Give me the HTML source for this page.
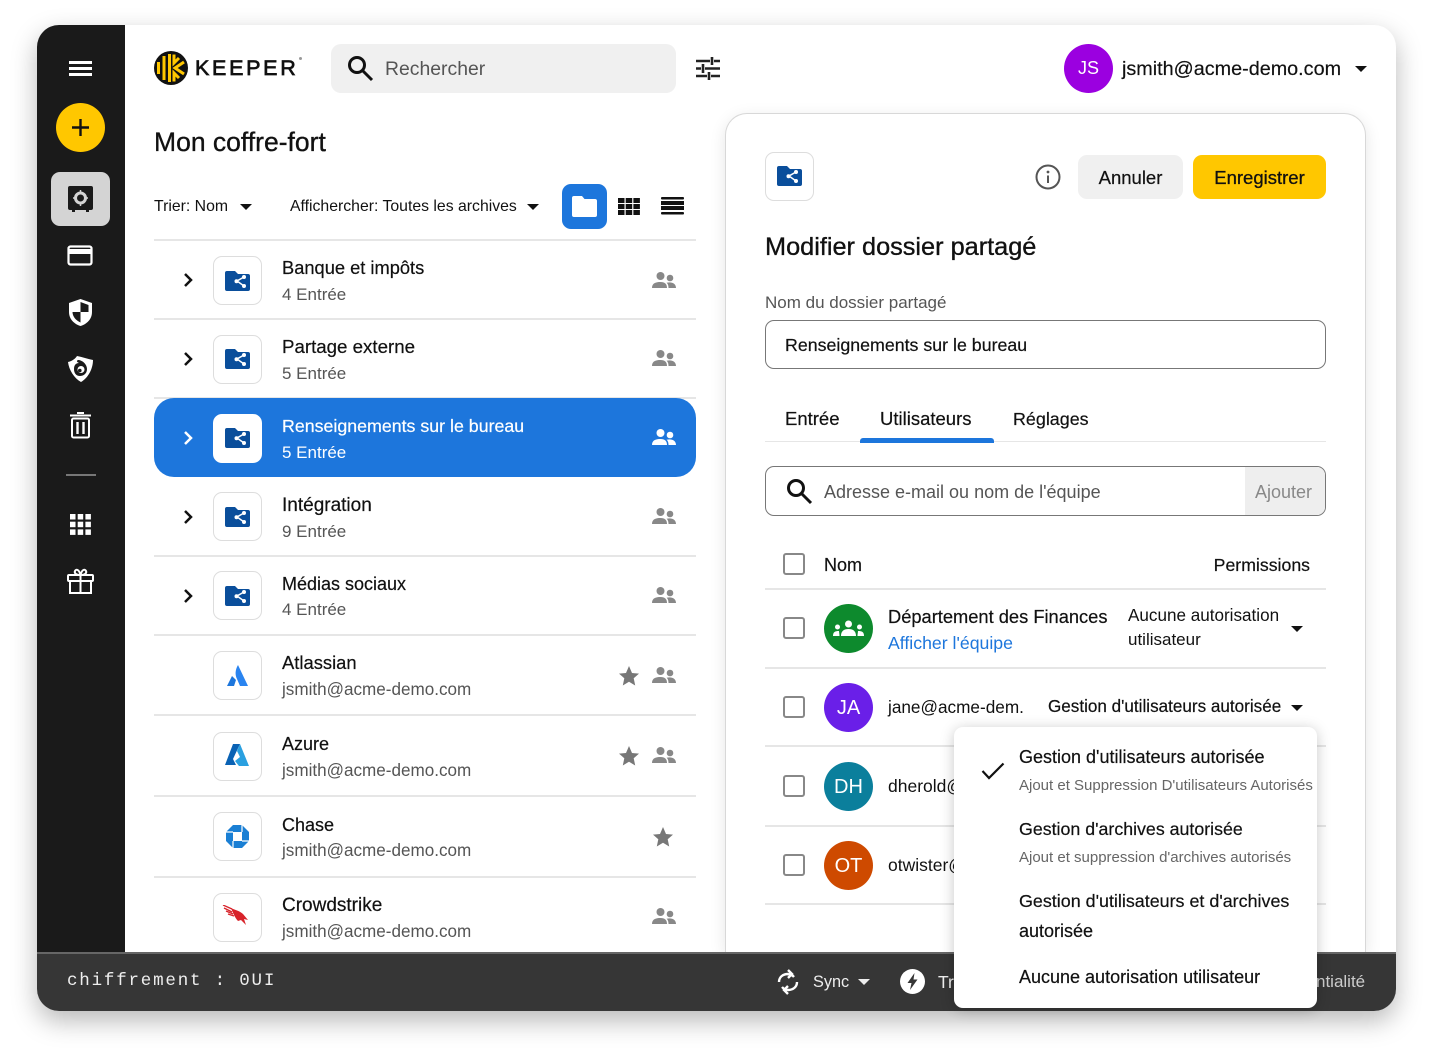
<!DOCTYPE html>
<html lang="fr"><head><meta charset="utf-8"><title>Keeper</title>
<style>
*{box-sizing:border-box}
html,body{margin:0;padding:0;width:1432px;height:1060px;overflow:hidden;background:#fff;font-family:"Liberation Sans",sans-serif;color:#111}
div,span,svg{position:absolute}
.t{white-space:nowrap;line-height:20px;height:20px;font-size:18px;color:#111;-webkit-text-stroke:.2px currentColor}
.s{color:#555;font-size:17px;-webkit-text-stroke:0}
.e{font-size:17.100px}
.hr{height:2px;background:#e6e6e6}
.box{width:49px;height:49px;border:1px solid #ddd;border-radius:9px;background:#fff}
.cb{left:783px;width:22px;height:22px;border:2px solid #888;border-radius:3px;background:#fff}
.av{left:824px;width:49px;height:49px;border-radius:50%;color:#fff;font-size:20px;line-height:49px;text-align:center}
.tri{width:0;height:0;border-left:6px solid transparent;border-right:6px solid transparent;border-top:6px solid #111}
</style></head><body>
<svg width="0" height="0" style="left:0;top:0"><defs>
<symbol id="fold" viewBox="0 0 25 20"><path d="M2 0H10L13 3H23A2 2 0 0 1 25 5V18A2 2 0 0 1 23 20H2A2 2 0 0 1 0 18V2A2 2 0 0 1 2 0Z" fill="#0a4e9b"/><path d="M19 6 12 10 19 15" fill="none" stroke="#fff" stroke-width="1.500"/><circle cx="19" cy="6" r="2" fill="#fff"/><circle cx="11.500" cy="10.300" r="2" fill="#fff"/><circle cx="19" cy="15" r="2" fill="#fff"/></symbol>
<symbol id="ppl" viewBox="0 0 24 17"><circle cx="8.500" cy="4" r="4" fill="currentColor"/><circle cx="18" cy="6" r="3.300" fill="currentColor"/><path d="M0 16C0 11 4 10 8.500 10S15 12 15 16ZM16.500 16C16.500 13 15.500 11.500 14.500 10.800 19 9.500 24 11 24 16Z" fill="currentColor"/></symbol>
<symbol id="chev" viewBox="0 0 10 16"><path d="M2 2 8 8 2 14" fill="none" stroke="currentColor" stroke-width="2.500"/></symbol>
<symbol id="star" viewBox="0 0 20 20"><path d="M10 0 13 7 20 7.600 14.700 12.300 16.200 19.500 10 15.700 3.800 19.500 5.300 12.300 0 7.600 7 7Z" fill="#777"/></symbol>
</defs></svg>

<div style="left:37px;top:25px;width:1359px;height:986px;background:#fff;border-radius:22px;box-shadow:0 10px 26px rgba(0,0,0,.28);overflow:hidden">
 <div style="left:0;top:0;width:88px;height:930px;background:#1a1a1a"></div>
 <div style="left:0;top:927px;width:1359px;height:59px;background:#363636;border-top:2px solid #666"></div>
</div>

<!-- sidebar -->
<div style="left:69px;top:61px;width:23px;height:3px;background:#fff"></div>
<div style="left:69px;top:67px;width:23px;height:3px;background:#fff"></div>
<div style="left:69px;top:73px;width:23px;height:3px;background:#fff"></div>
<div style="left:56px;top:103px;width:49px;height:49px;border-radius:50%;background:#ffc700"></div>
<svg style="left:71px;top:118px" width="19" height="19" viewBox="0 0 19 19"><path d="M9.500 1V18M1 9.500H18" stroke="#111" stroke-width="2.400"/></svg>
<div style="left:51px;top:172px;width:59px;height:54px;border-radius:9px;background:#d4d4d4"></div>
<svg style="left:68px;top:186px" width="25" height="27" viewBox="0 0 25 27"><rect width="25" height="24" rx="2" fill="#1a1a1a"/><path d="M4 24h3v2H4zM18 24h3v2h-3z" fill="#1a1a1a"/><circle cx="12.500" cy="12" r="5" fill="none" stroke="#d4d4d4" stroke-width="3"/><path d="M12.500 4v2M12.500 18v2M5 12h2M18 12h2" stroke="#d4d4d4" stroke-width="1.500"/></svg>
<svg style="left:67px;top:245px" width="27" height="22" viewBox="0 0 27 22"><rect x="1.500" y="1.500" width="23" height="18" rx="2" fill="none" stroke="#fff" stroke-width="2.200"/><rect x="1.500" y="4" width="23" height="5" fill="#fff"/></svg>
<svg style="left:68px;top:298px" width="25" height="29" viewBox="0 0 25 29"><path d="M12.500 1 24 5V14C24 21 19 26 12.500 28 6 26 1 21 1 14V5Z" fill="#fff"/><path d="M12.500 4 20.500 7V14H12.500ZM12.500 14V24.500C8 22.500 4.500 18.500 4.500 14Z" fill="#1a1a1a"/></svg>
<svg style="left:67px;top:355px" width="27" height="28" viewBox="0 0 27 28"><path d="M1 7C5 6 8 4 10 1 15 2 21 4 26 5 26 14 21 23 14 27 7 23 2 15 1 7Z" fill="#fff"/><path d="M11 5C15 5 20 9 20 14 20 19 16 21 13 21 9 21 7 18 7 14 7 10 9 8 12 8 10 7 9 6 11 5Z" fill="#1a1a1a"/><circle cx="14" cy="14.500" r="3.500" fill="#fff"/><circle cx="12.800" cy="15.500" r="1.800" fill="#1a1a1a"/></svg>
<svg style="left:70px;top:412px" width="21" height="27" viewBox="0 0 21 27"><path d="M0 3.500H21M7 1H14" stroke="#fff" stroke-width="2"/><rect x="2" y="6.500" width="17" height="19" rx="1.500" fill="none" stroke="#fff" stroke-width="2"/><path d="M7.500 10V22M13.500 10V22" stroke="#fff" stroke-width="2.400"/></svg>
<div style="left:66px;top:474px;width:30px;height:2px;background:#777"></div>
<svg style="left:70px;top:514px" width="21" height="21" viewBox="0 0 21 21" fill="#fff"><rect width="5.500" height="5.500"/><rect x="7.700" width="5.500" height="5.500"/><rect x="15.400" width="5.500" height="5.500"/><rect y="7.700" width="5.500" height="5.500"/><rect x="7.700" y="7.700" width="5.500" height="5.500"/><rect x="15.400" y="7.700" width="5.500" height="5.500"/><rect y="15.400" width="5.500" height="5.500"/><rect x="7.700" y="15.400" width="5.500" height="5.500"/><rect x="15.400" y="15.400" width="5.500" height="5.500"/></svg>
<svg style="left:67px;top:568px" width="27" height="26" viewBox="0 0 27 26" fill="none" stroke="#fff" stroke-width="2"><rect x="1" y="7" width="25" height="6" rx="1"/><path d="M3 13V25H24V13M13.500 7V25M13.500 7C9 7 7 5 8 3S12 1 13.500 7C15 1 18 1 19 3S18 7 13.500 7Z"/></svg>

<!-- header -->
<svg style="left:154px;top:51px" width="34" height="34" viewBox="0 0 34 34"><circle cx="17" cy="17" r="17" fill="#111"/><g fill="none" stroke="#ffc700" stroke-width="3"><path d="M4.500 11V23M10 5V29"/><path d="M15.500 3V31"/><path d="M20 3.500V12L25 7M30 11 21 17 30 23M20 30.500V22L25 27"/></g></svg>
<div class="t" style="left:195px;top:58px;line-height:20px;font-size:21.500px;letter-spacing:2.700px;-webkit-text-stroke:.7px #111">KEEPER</div>
<div style="left:299px;top:57px;width:3px;height:3px;border-radius:50%;background:#999"></div>
<div style="left:331px;top:44px;width:345px;height:49px;background:#f0f0f0;border-radius:10px"></div>
<svg style="left:347px;top:55px" width="27" height="27" viewBox="0 0 27 27" fill="none" stroke="#111" stroke-width="3"><circle cx="10" cy="10" r="7.500"/><path d="M15.500 15.500 25 25"/></svg>
<div class="t" style="left:385px;top:59px;color:#555;font-size:19.400px;-webkit-text-stroke:0">Rechercher</div>
<svg style="left:696px;top:57px" width="24" height="23" viewBox="0 0 24 23" fill="none" stroke="#222" stroke-width="2.600"><path d="M0 4H14M18 4H24M0 11.500H5M9 11.500H24M0 19H11M15 19H24M16 0V8M7 7V16M13 15V23"/></svg>
<div style="left:1064px;top:44px;width:49px;height:49px;border-radius:50%;background:#9b00e0;color:#fff;font-size:18px;line-height:48px;text-align:center">JS</div>
<div class="t" style="left:1122px;top:59px;font-size:19.800px">jsmith@acme-demo.com</div>
<div class="tri" style="left:1355px;top:66px"></div>

<!-- left list -->
<div class="t" style="left:154px;top:130px;height:24px;line-height:24px;font-size:26.500px;-webkit-text-stroke:.35px #111">Mon coffre-fort</div>
<div class="t" style="left:154px;top:197px;font-size:15.800px;-webkit-text-stroke:0">Trier: Nom</div>
<div class="tri" style="left:240px;top:204px"></div>
<div class="t" style="left:290px;top:197px;font-size:15.800px;-webkit-text-stroke:0">Affichercher: Toutes les archives</div>
<div class="tri" style="left:527px;top:204px"></div>
<div style="left:562px;top:184px;width:45px;height:45px;background:#1d76dc;border-radius:9px"></div>
<svg style="left:572px;top:196px" width="25" height="21" viewBox="0 0 25 21"><path d="M2 0H10L12.500 3H23A2 2 0 0 1 25 5V19A2 2 0 0 1 23 21H2A2 2 0 0 1 0 19V2A2 2 0 0 1 2 0Z" fill="#fff"/></svg>
<svg style="left:618px;top:198px" width="22" height="17" viewBox="0 0 22 17" fill="#111"><rect width="6.500" height="5"/><rect x="7.700" width="6.500" height="5"/><rect x="15.400" width="6.500" height="5"/><rect y="6" width="6.500" height="5"/><rect x="7.700" y="6" width="6.500" height="5"/><rect x="15.400" y="6" width="6.500" height="5"/><rect y="12" width="6.500" height="5"/><rect x="7.700" y="12" width="6.500" height="5"/><rect x="15.400" y="12" width="6.500" height="5"/></svg>
<svg style="left:661px;top:197px" width="24" height="18" viewBox="0 0 24 18" fill="#111"><rect width="23" height="2.500" rx="1"/><rect y="4" width="23" height="4"/><rect y="9" width="23" height="4"/><rect y="15" width="23" height="2.500" rx="1"/></svg>

<div class="hr" style="left:154px;top:239px;width:542px"></div>
<div class="hr" style="left:154px;top:318px;width:542px"></div>
<div class="hr" style="left:154px;top:397px;width:542px"></div>
<div class="hr" style="left:154px;top:555px;width:542px"></div>
<div class="hr" style="left:154px;top:634px;width:542px"></div>
<div class="hr" style="left:154px;top:714px;width:542px"></div>
<div class="hr" style="left:154px;top:795px;width:542px"></div>
<div class="hr" style="left:154px;top:876px;width:542px"></div>
<div style="left:154px;top:398px;width:542px;height:79px;background:#1d76dc;border-radius:20px"></div>

<svg style="left:183px;top:272px;color:#111" width="10" height="16"><use href="#chev"/></svg>
<div class="box" style="left:213px;top:256px"></div><svg style="left:225px;top:271px" width="25" height="20"><use href="#fold"/></svg>
<div class="t" style="left:282px;top:258px;font-size:18.300px">Banque et impôts</div><div class="t s" style="left:282px;top:285px">4 Entrée</div>
<svg style="left:652px;top:272px;color:#888" width="24" height="17"><use href="#ppl"/></svg>

<svg style="left:183px;top:351px;color:#111" width="10" height="16"><use href="#chev"/></svg>
<div class="box" style="left:213px;top:335px"></div><svg style="left:225px;top:349px" width="25" height="20"><use href="#fold"/></svg>
<div class="t" style="left:282px;top:337px;font-size:18.700px">Partage externe</div><div class="t s" style="left:282px;top:364px">5 Entrée</div>
<svg style="left:652px;top:350px;color:#888" width="24" height="17"><use href="#ppl"/></svg>

<svg style="left:183px;top:430px;color:#fff" width="10" height="16"><use href="#chev"/></svg>
<div class="box" style="left:213px;top:414px;border-color:#fff"></div><svg style="left:225px;top:428px" width="25" height="20"><use href="#fold"/></svg>
<div class="t" style="left:282px;top:416px;color:#fff;font-size:17.800px">Renseignements sur le bureau</div><div class="t s" style="left:282px;top:443px;color:#fff">5 Entrée</div>
<svg style="left:652px;top:429px;color:#fff" width="24" height="17"><use href="#ppl"/></svg>

<svg style="left:183px;top:509px;color:#111" width="10" height="16"><use href="#chev"/></svg>
<div class="box" style="left:213px;top:492px"></div><svg style="left:225px;top:507px" width="25" height="20"><use href="#fold"/></svg>
<div class="t" style="left:282px;top:496px;font-size:19px">Intégration</div><div class="t s" style="left:282px;top:522px">9 Entrée</div>
<svg style="left:652px;top:508px;color:#888" width="24" height="17"><use href="#ppl"/></svg>

<svg style="left:183px;top:588px;color:#111" width="10" height="16"><use href="#chev"/></svg>
<div class="box" style="left:213px;top:571px"></div><svg style="left:225px;top:586px" width="25" height="20"><use href="#fold"/></svg>
<div class="t" style="left:282px;top:574px">Médias sociaux</div><div class="t s" style="left:282px;top:600px">4 Entrée</div>
<svg style="left:652px;top:587px;color:#888" width="24" height="17"><use href="#ppl"/></svg>

<div class="box" style="left:213px;top:651px"></div>
<svg style="left:227px;top:665px" width="21" height="21" viewBox="0 0 21 21"><path d="M0 21 5 11 9 15 7 21Z" fill="#1d76dc"/><path d="M11 0C8 5 8 10 10 14L13 21H21Z" fill="#2a84f0"/></svg>
<div class="t" style="left:282px;top:653px;font-size:18.400px">Atlassian</div><div class="t s e" style="left:282px;top:680px">jsmith@acme-demo.com</div>
<svg style="left:619px;top:666px" width="20" height="20"><use href="#star"/></svg>
<svg style="left:652px;top:667px;color:#888" width="24" height="17"><use href="#ppl"/></svg>

<div class="box" style="left:213px;top:732px"></div>
<svg style="left:225px;top:744px" width="24" height="22" viewBox="0 0 24 22"><path d="M8 0H15L8 15 11 21H0Z" fill="#0a62b4"/><path d="M15 0 24 22H14L10 17 15 13 12 7Z" fill="#2aa0e0"/></svg>
<div class="t" style="left:282px;top:734px">Azure</div><div class="t s e" style="left:282px;top:761px">jsmith@acme-demo.com</div>
<svg style="left:619px;top:746px" width="20" height="20"><use href="#star"/></svg>
<svg style="left:652px;top:747px;color:#888" width="24" height="17"><use href="#ppl"/></svg>

<div class="box" style="left:213px;top:812px"></div>
<svg style="left:226px;top:825px" width="23" height="23" viewBox="0 0 23 23"><path d="M7 0H16L23 7V16L16 23H7L0 16V7Z" fill="#1a7fd4"/><rect x="7" y="7" width="9" height="9" fill="#fff"/><path d="M7 7H0M16 7V0M16 16H23M7 16V23" stroke="#fff" stroke-width="1.200"/></svg>
<div class="t" style="left:282px;top:815px">Chase</div><div class="t s e" style="left:282px;top:841px">jsmith@acme-demo.com</div>
<svg style="left:653px;top:827px" width="20" height="20"><use href="#star"/></svg>

<div class="box" style="left:213px;top:893px"></div>
<svg style="left:222px;top:905px" width="27" height="21" viewBox="0 0 27 21"><path d="M1 0 10 4M2 3 10 7M4 6 11 9M6 9 12 11" stroke="#d8232a" stroke-width="1.300" fill="none"/><path d="M9 3C13 5 18 6 21 9L26 15 22 14 24 20 19 15 16 16C13 13 11 8 9 3Z" fill="#d8232a"/></svg>
<div class="t" style="left:282px;top:896px;font-size:19px">Crowdstrike</div><div class="t s e" style="left:282px;top:922px">jsmith@acme-demo.com</div>
<svg style="left:652px;top:908px;color:#888" width="24" height="17"><use href="#ppl"/></svg>

<!-- footer text -->
<div class="t" style="left:67px;top:971px;font:17.500px/20px 'Liberation Mono',monospace;color:#eee;letter-spacing:1.800px;-webkit-text-stroke:0">chiffrement : 0UI</div>
<svg style="left:777px;top:969px" width="22" height="26" viewBox="0 0 22 26" fill="none" stroke="#fff" stroke-width="2.400"><path d="M2 13C2 8 6 5 11 5M20 13C20 18 16 21 11 21M17 8A9 9 0 0 0 11 5M5 18A9 9 0 0 0 11 21"/><path d="M11 1 15 5 11 9M11 17 7 21 11 25"/></svg>
<div class="t" style="left:813px;top:972px;color:#eee;font-size:16.300px;-webkit-text-stroke:0">Sync</div>
<div class="tri" style="left:858px;top:979px;border-top-color:#eee"></div>
<svg style="left:900px;top:969px" width="25" height="25" viewBox="0 0 25 25"><circle cx="12.500" cy="12.500" r="12.500" fill="#fff"/><path d="M14.500 4 7.500 14H11.500L10 21 17.500 10.500H13.500Z" fill="#363636"/></svg>
<div class="t" style="left:938px;top:972px;color:#eee;font-size:17.500px;-webkit-text-stroke:0">Tr</div>
<div class="t" style="left:1316px;top:972px;color:#ccc;font-size:17px;-webkit-text-stroke:0">ntialité</div>

<!-- right panel -->
<div style="left:725px;top:113px;width:641px;height:839px;background:#fff;border:1px solid #d8d8d8;border-bottom:0;border-radius:22px 22px 0 0;box-shadow:0 4px 16px rgba(0,0,0,.1);clip-path:inset(-20px -20px 0 -20px)"></div>
<div class="box" style="left:765px;top:152px"></div>
<svg style="left:777px;top:166px" width="25" height="20"><use href="#fold"/></svg>
<svg style="left:1035px;top:164px" width="26" height="26" viewBox="0 0 26 26"><circle cx="13" cy="13" r="11.500" fill="none" stroke="#555" stroke-width="2"/><rect x="12" y="11.500" width="2" height="7.500" fill="#555"/><circle cx="13" cy="8" r="1.400" fill="#555"/></svg>
<div style="left:1078px;top:155px;width:105px;height:44px;background:#f0f0f0;border-radius:9px;text-align:center;line-height:46px;font-size:18.500px;-webkit-text-stroke:.2px #111">Annuler</div>
<div style="left:1193px;top:155px;width:133px;height:44px;background:#ffc700;border-radius:9px;text-align:center;line-height:46px;font-size:18.500px;-webkit-text-stroke:.3px #111">Enregistrer</div>
<div class="t" style="left:765px;top:235px;height:24px;line-height:24px;font-size:25.300px;-webkit-text-stroke:.35px #111">Modifier dossier partagé</div>
<div class="t s" style="left:765px;top:293px">Nom du dossier partagé</div>
<div style="left:765px;top:320px;width:561px;height:49px;border:1px solid #777;border-radius:9px"></div>
<div class="t" style="left:785px;top:335px;font-size:17.800px">Renseignements sur le bureau</div>
<div class="t" style="left:785px;top:409px;font-size:18.500px">Entrée</div>
<div class="t" style="left:880px;top:409px;font-size:18.500px">Utilisateurs</div>
<div class="t" style="left:1013px;top:409px;font-size:17.900px">Réglages</div>
<div class="hr" style="left:765px;top:441px;width:561px;height:1px"></div>
<div style="left:860px;top:438px;width:134px;height:5px;background:#1d76dc;border-radius:3px 3px 0 0"></div>
<div style="left:765px;top:466px;width:561px;height:50px;border:1px solid #777;border-radius:9px;overflow:hidden"><div style="right:0;top:0;width:80px;height:48px;background:#eee"></div></div>
<svg style="left:786px;top:478px" width="27" height="27" viewBox="0 0 27 27" fill="none" stroke="#111" stroke-width="3"><circle cx="10" cy="10" r="7.500"/><path d="M15.500 15.500 25 25"/></svg>
<div class="t" style="left:824px;top:482px;color:#555;-webkit-text-stroke:0">Adresse e-mail ou nom de l'équipe</div>
<div class="t" style="left:1255px;top:482px;color:#888;-webkit-text-stroke:0">Ajouter</div>
<div class="cb" style="top:553px"></div>
<div class="t" style="left:824px;top:555px">Nom</div>
<div class="t" style="right:122px;top:555px;font-size:17.700px">Permissions</div>
<div class="hr" style="left:765px;top:588px;width:561px"></div>
<div class="hr" style="left:765px;top:667px;width:561px"></div>
<div class="hr" style="left:765px;top:745px;width:561px"></div>
<div class="hr" style="left:765px;top:825px;width:561px"></div>
<div class="hr" style="left:765px;top:903px;width:561px"></div>

<div class="cb" style="top:617px"></div>
<div class="av" style="top:604px;background:#0d8a2d"></div>
<svg style="left:833px;top:620px" width="31" height="17" viewBox="0 0 31 17" fill="#fff"><circle cx="15.500" cy="4" r="3.500"/><circle cx="4.500" cy="7" r="2.500"/><circle cx="26.500" cy="7" r="2.500"/><path d="M8 16C8 11 11 9 15.500 9S23 11 23 16ZM0 16C0 12 2 11 6 11 6 12 6.500 14 6.500 16ZM31 16C31 12 29 11 25 11 25 12 24.500 14 24.500 16Z"/></svg>
<div class="t" style="left:888px;top:607px;font-size:18.300px">Département des Finances</div>
<div class="t" style="left:888px;top:633px;color:#1d76dc;font-size:17.700px;-webkit-text-stroke:0">Afficher l'équipe</div>
<div class="t" style="left:1128px;top:606px;font-size:17.100px;-webkit-text-stroke:0">Aucune autorisation</div>
<div class="t" style="left:1128px;top:630px;font-size:17px;-webkit-text-stroke:0">utilisateur</div>
<div class="tri" style="left:1291px;top:626px"></div>

<div class="cb" style="top:696px"></div>
<div class="av" style="top:683px;background:#6a1fe8;line-height:51px">JA</div>
<div class="t" style="left:888px;top:697px;font-size:17.200px;-webkit-text-stroke:0">jane@acme-dem.</div>
<div class="t" style="left:1048px;top:697px;font-size:17.100px">Gestion d'utilisateurs autorisée</div>
<div class="tri" style="left:1291px;top:705px"></div>

<div class="cb" style="top:775px"></div>
<div class="av" style="top:762px;background:#0b7f9c;line-height:51px">DH</div>
<div class="t" style="left:888px;top:776px;font-size:17.500px;-webkit-text-stroke:0">dherold@</div>

<div class="cb" style="top:854px"></div>
<div class="av" style="top:841px;background:#ce4a00;line-height:51px">OT</div>
<div class="t" style="left:888px;top:855px;font-size:17.500px;-webkit-text-stroke:0">otwister@</div>

<!-- dropdown -->
<div style="left:954px;top:727px;width:363px;height:281px;background:#fff;border-radius:9px;box-shadow:0 2px 14px rgba(0,0,0,.22)"></div>
<svg style="left:981px;top:762px" width="24" height="18" viewBox="0 0 24 18"><path d="M1.500 9 8 16 22.500 1.500" fill="none" stroke="#111" stroke-width="2.200"/></svg>
<div class="t" style="left:1019px;top:747px">Gestion d'utilisateurs autorisée</div>
<div class="t s" style="left:1019px;top:776px;font-size:15px;color:#666">Ajout et Suppression D'utilisateurs Autorisés</div>
<div class="t" style="left:1019px;top:819px;font-size:17.800px">Gestion d'archives autorisée</div>
<div class="t s" style="left:1019px;top:848px;font-size:15px;color:#666">Ajout et suppression d'archives autorisés</div>
<div class="t" style="left:1019px;top:891px;font-size:17.900px">Gestion d'utilisateurs et d'archives</div>
<div class="t" style="left:1019px;top:921px">autorisée</div>
<div class="t" style="left:1019px;top:967px">Aucune autorisation utilisateur</div>
</body></html>
